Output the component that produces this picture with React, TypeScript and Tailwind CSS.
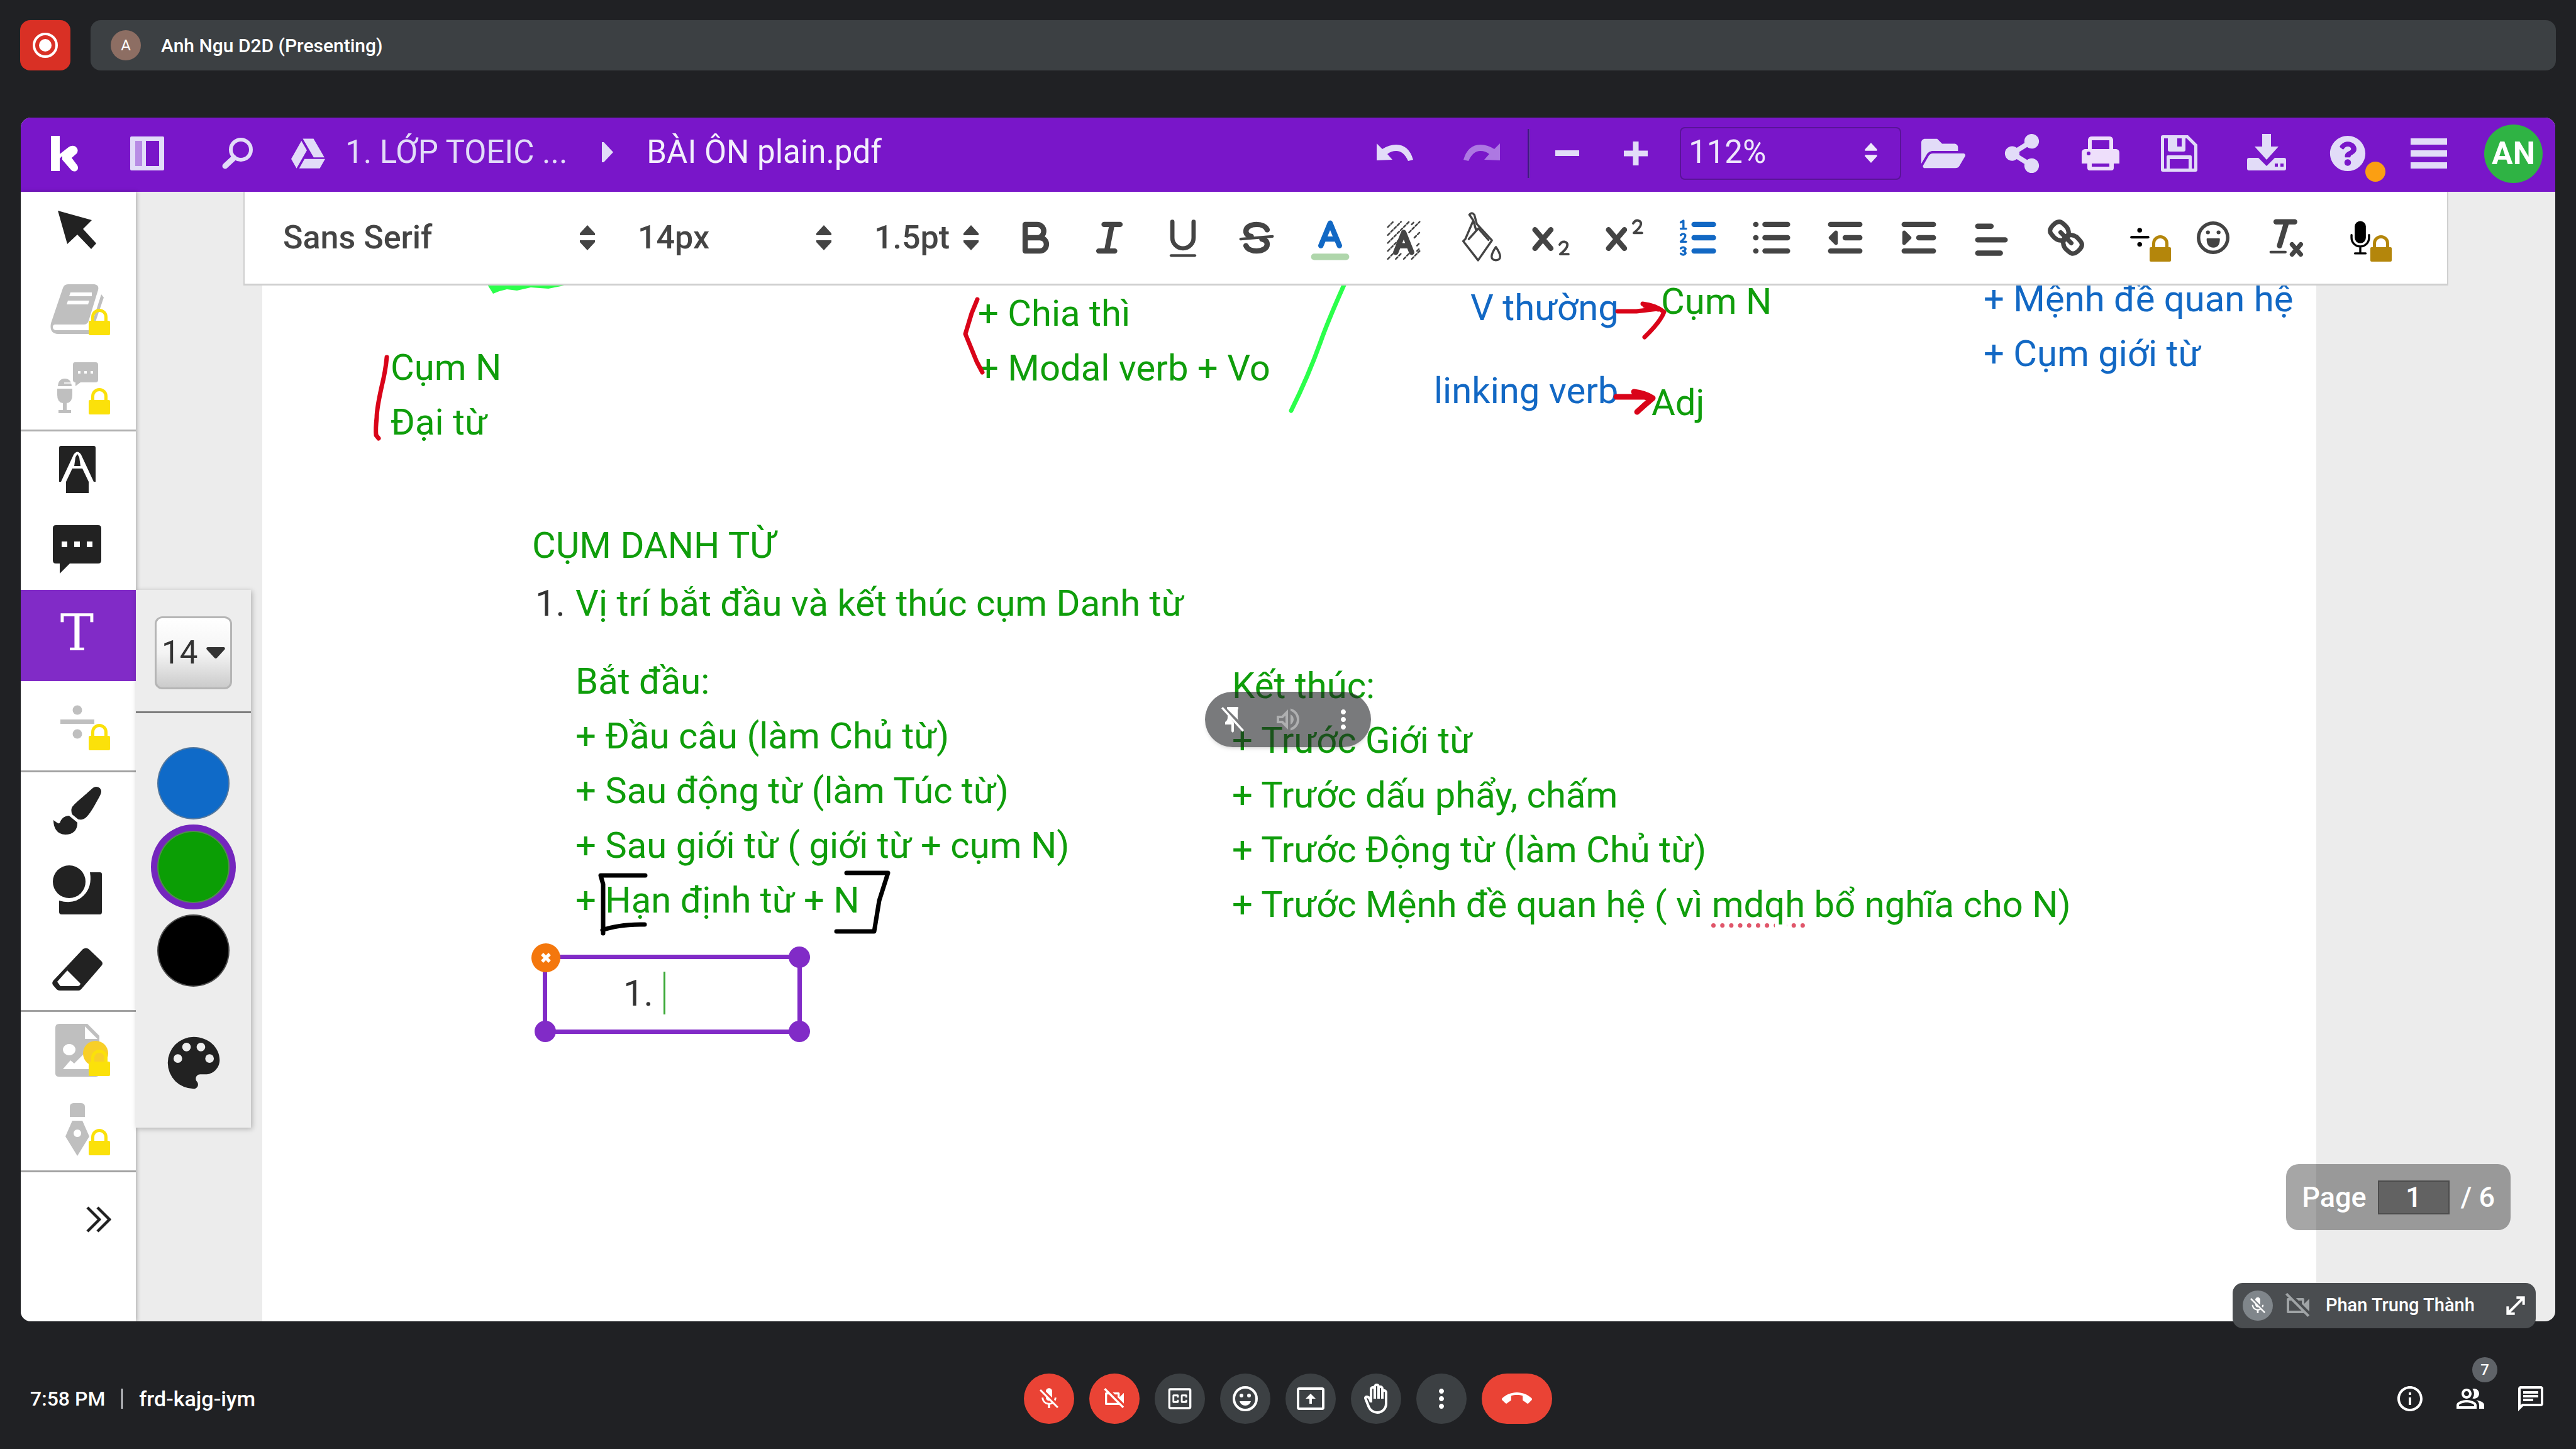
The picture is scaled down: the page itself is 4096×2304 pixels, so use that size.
import React from "react";
import { FaFolderOpen, FaGoogleDrive, FaPaintBrush, FaQuestionCircle, FaShareAlt } from "react-icons/fa";
import {
  MdCallEnd,
  MdMicOff,
  MdMoreVert,
  MdOutlineBackHand,
  MdOutlineChat,
  MdOutlineInfo,
  MdOutlinePeopleAlt,
  MdOutlineVideocamOff,
  MdOutlineVolumeUp,
} from "react-icons/md";

type IconProps = { className?: string; viewBox?: string; children: React.ReactNode };

function Icon({ className = "size-12", viewBox = "0 0 24 24", children }: IconProps) {
  return (
    <svg aria-hidden="true" className={className} viewBox={viewBox} fill="currentColor">
      {children}
    </svg>
  );
}

function SortArrows({ className }: { className: string }) {
  return (
    <Icon className={className} viewBox="0 0 24 40">
      <path d="M12 0 24 13v3H0v-3zM0 24h24v3L12 40 0 27z" />
    </Icon>
  );
}

function Lock({ className }: { className: string }) {
  return (
    <Icon className={className} viewBox="0 0 34 42">
      <path d="M2 19h2v-6a13 13 0 0 1 26 0v6h2a2 2 0 0 1 2 2v19a2 2 0 0 1-2 2H2a2 2 0 0 1-2-2V21a2 2 0 0 1 2-2zm7 0h16v-6a8 8 0 0 0-16 0z" />
    </Icon>
  );
}

/* ---------- Meet top bar ---------- */

function PresenterBar() {
  return (
    <header className="flex items-center gap-8 px-8 pt-8">
      <button aria-label="Recording" className="flex size-20 items-center justify-center rounded-2xl bg-[#d93025] text-white">
        <Icon className="size-12">
          <circle cx="12" cy="12" r="9" fill="none" stroke="currentColor" strokeWidth="2" />
          <circle cx="12" cy="12" r="5" />
        </Icon>
      </button>
      <div className="flex h-20 flex-1 items-center gap-8 rounded-2xl bg-[#3c4043] px-8">
        <span className="flex size-12 items-center justify-center rounded-full bg-[#8d6e63] text-[24px] text-white">A</span>
        <span className="text-[30px] font-medium text-white">Anh Ngu D2D (Presenting)</span>
      </div>
    </header>
  );
}

/* ---------- Kami title bar ---------- */

function HeaderButton({ label, width, children }: { label: string; width: string; children: React.ReactNode }) {
  return (
    <button aria-label={label} className={`relative flex h-full shrink-0 items-center justify-center ${width}`}>
      {children}
    </button>
  );
}

function TitleBar() {
  return (
    <div className="flex h-[118px] shrink-0 items-center bg-[#7916c9] pr-5 pb-1 pl-12 text-[#e2dcf8]">
      <a href="#home" aria-label="Kami" className="text-white">
        <Icon className="h-[58px] w-[46px]" viewBox="0 0 46 58">
          <path d="M0 1h14v29L28 19q6-4 11-1 6 5 2 11L33 36l9 12q3 6-2 9-5 2-9-3L18 39v-6l-4 4v20H0z" />
        </Icon>
      </a>
      <button aria-label="Toggle sidebar" className="ml-20">
        <Icon className="h-[54px] w-[54px]" viewBox="0 0 54 54">
          <path fillRule="evenodd" d="M2 0h50a2 2 0 0 1 2 2v50a2 2 0 0 1-2 2H2a2 2 0 0 1-2-2V2a2 2 0 0 1 2-2zm6 7v40h11V7zm17 0v40h21V7z" />
          <path d="M8 7h11v40H8z" opacity=".6" />
        </Icon>
      </button>
      <button aria-label="Search" className="ml-[92px]">
        <Icon className="size-[52px]" viewBox="0 0 52 52">
          <g fill="none" stroke="currentColor" strokeLinecap="round">
            <circle cx="30" cy="20" r="16" strokeWidth="6" />
            <path d="M19 33 5 46" strokeWidth="9" />
          </g>
        </Icon>
      </button>
      <FaGoogleDrive aria-hidden="true" className="ml-[58px] size-[54px]" />
      <nav aria-label="Breadcrumb" className="ml-8 flex items-center pb-1 text-[51px] leading-[64px]">
        <a href="#folder">1. LỚP TOEIC ...</a>
        <Icon className="mx-[53px] h-8 w-5" viewBox="0 0 20 32">
          <path d="M2 0h3l15 16L5 32H2z" />
        </Icon>
        <span className="text-[#f3effc]">BÀI ÔN plain.pdf</span>
      </nav>

      <div className="ml-auto flex h-full items-center">
        <HeaderButton label="Undo" width="w-[138px]">
          <Icon className="h-8 w-[58px]" viewBox="0 0 58 32">
            <path d="M0 0 9 9Q20 2 31 2q20 0 27 24l-8 2Q43 12 31 12q-8 0-14 5l8 9-25 1z" />
          </Icon>
        </HeaderButton>
        <HeaderButton label="Redo" width="w-[138px]">
          <Icon className="h-8 w-[58px] text-[#ad78e2]" viewBox="0 0 58 32">
            <path d="M58 0 49 9Q38 2 27 2 7 2 0 26l8 2Q15 12 27 12q8 0 14 5l-8 9 25 1z" />
          </Icon>
        </HeaderButton>
        <span className="mx-1 h-[78px] w-1 border-r border-[#8d4bd0] bg-[#3d1a7d]" />
        <HeaderButton label="Zoom out" width="w-[109px]">
          <Icon className="size-[38px]" viewBox="0 0 38 38">
            <rect y="14" width="38" height="9" />
          </Icon>
        </HeaderButton>
        <HeaderButton label="Zoom in" width="w-[109px]">
          <Icon className="size-[38px]" viewBox="0 0 38 38">
            <path d="M14.500 0h9v14.500H38v9H23.500V38h-9V23.500H0v-9h14.500z" />
          </Icon>
        </HeaderButton>
        <div className="relative mr-1 ml-4 h-[84px] w-[352px] rounded-lg border-2 border-[#5a1398] text-[#eee8fb]">
          <select aria-label="Zoom level" className="size-full appearance-none bg-transparent pb-1 pl-3 text-[51px] leading-[64px]">
            <option>112%</option>
          </select>
          <SortArrows className="pointer-events-none absolute top-[23px] right-9 h-[32px] w-5" />
        </div>
        <HeaderButton label="Open" width="w-[125px]">
          <FaFolderOpen className="size-[70px]" />
        </HeaderButton>
        <HeaderButton label="Share" width="w-[125px]">
          <FaShareAlt className="size-[62px]" />
        </HeaderButton>
        <HeaderButton label="Print" width="w-[125px]">
          <Icon className="h-[54px] w-[60px] text-[#eedffb]" viewBox="0 0 60 54">
            <path fillRule="evenodd" d="M10 20V5q1-5 6-5h28q5 0 6 5v15h5q5 1 5 6v17h-9v7q0 4-4 4H13q-4 0-4-4v-7H0V26q0-5 5-6zm6-14v14h28V6zM16 43v5h28v-5z" />
            <circle cx="11" cy="27" r="3" fill="#7916c9" />
          </Icon>
        </HeaderButton>
        <HeaderButton label="Save" width="w-[125px]">
          <Icon className="size-[58px]" viewBox="0 0 58 58">
            <path fillRule="evenodd" d="M3 0h40l15 15v40a3 3 0 0 1-3 3H3a3 3 0 0 1-3-3V3a3 3 0 0 1 3-3zm2 5v48h4V34q0-2 2-2h36q2 0 2 2v19h4V17L41 5h-2v18q0 3-3 3H14q-3 0-3-3V5zm9 33v15h30V38zM26 5v13h7V5z" />
          </Icon>
        </HeaderButton>
        <div className="ml-3 flex h-full">
          <HeaderButton label="Download" width="w-[129px]">
            <Icon className="mb-1 h-[58px] w-[62px]" viewBox="0 0 62 58">
              <path fillRule="evenodd" d="M24 0h14v20h12L31 41 12 20h12zM3 38h15l13 13 13-13h15q3 0 3 3v14q0 3-3 3H3q-3 0-3-3V41q0-3 3-3zm41 9v5h5v-5zm9 0v5h5v-5z" />
            </Icon>
          </HeaderButton>
          <HeaderButton label="Help" width="w-[129px]">
            <FaQuestionCircle className="size-[58px]" />
            <span className="absolute top-[70px] right-1 size-8 rounded-full bg-[#fb9f12]" />
          </HeaderButton>
          <HeaderButton label="Menu" width="w-[129px]">
            <Icon className="h-12 w-[58px]" viewBox="0 0 58 48">
              <path d="M0 0h58v10H0zM0 19h58v10H0zM0 38h58v10H0z" />
            </Icon>
          </HeaderButton>
        </div>
        <button className="ml-6 flex size-[93px] items-center justify-center rounded-full bg-[#2fb344] text-[50px] font-bold text-white">
          AN
        </button>
      </div>
    </div>
  );
}

/* ---------- Tool column ---------- */

function Tool({ label, locked = false, children }: { label: string; locked?: boolean; children: React.ReactNode }) {
  return (
    <button aria-label={label} className="relative flex h-[126px] w-full items-center justify-center pr-1 pb-1">
      {children}
      {locked && <Lock className="absolute top-[60px] right-[41px] h-[42px] w-[34px] text-[#fbe10a]" />}
    </button>
  );
}

const COLOURS = [
  { name: "Blue", className: "bg-[#0f6ac8]" },
  { name: "Green", className: "bg-[#0b9e05] ring-[10px] ring-[#7426bd]" },
  { name: "Black", className: "bg-black" },
];

function TextOptions() {
  return (
    <div className="absolute top-0 left-full z-20 w-[183px] bg-[#ededed] pb-[48px] shadow-[2px_2px_8px_rgba(0,0,0,0.25)]">
      <div className="flex h-[196px] items-start justify-center border-b-[3px] border-[#7e7e7e] pt-[42px]">
        <div className="relative h-[116px] w-[123px] rounded-xl border-3 border-[#b5b5b5] bg-linear-to-b from-white via-[#f4f4f4] to-[#cbcbcb] text-[#333]">
          <select aria-label="Text size" className="size-full appearance-none bg-transparent pl-[8px] text-[51px] leading-[64px]">
            <option>14</option>
          </select>
          <Icon className="pointer-events-none absolute top-[46px] right-2 h-5 w-[30px]" viewBox="0 0 30 20">
            <path d="M2 0h26q3 1 1 4L17 17q-2 2-4 0L1 4Q-1 1 2 0z" />
          </Icon>
        </div>
      </div>
      <fieldset className="flex flex-col items-center gap-[18px] pt-[54px]">
        {COLOURS.map((c) => (
          <input
            key={c.name}
            type="radio"
            name="colour"
            aria-label={c.name}
            defaultChecked={c.name === "Green"}
            className={`size-[115px] appearance-none rounded-full border-2 border-[#808080]/60 ${c.className}`}
          />
        ))}
      </fieldset>
      <button aria-label="More colours" className="mx-auto mt-[66px] block text-[#222]">
        <Icon className="size-[110px]">
          <path d="M12 3a9 9 0 0 0 0 18c.83 0 1.500-.67 1.500-1.500 0-.39-.15-.74-.39-1.010-.23-.26-.38-.61-.38-.99 0-.83.67-1.500 1.500-1.500H16c2.760 0 5-2.240 5-5 0-4.420-4.030-8-9-8zm-5.500 9a1.500 1.500 0 1 1 0-3 1.500 1.500 0 0 1 0 3zm3-4a1.500 1.500 0 1 1 0-3 1.500 1.500 0 0 1 0 3zm5 0a1.500 1.500 0 1 1 0-3 1.500 1.500 0 0 1 0 3zm3 4a1.500 1.500 0 1 1 0-3 1.500 1.500 0 0 1 0 3z" />
        </Icon>
      </button>
    </div>
  );
}

function ToolColumn() {
  return (
    <aside className="relative z-10 flex w-[183px] shrink-0 flex-col bg-white text-[#222] shadow-[2px_0_6px_rgba(0,0,0,0.25)]">
      <div className="border-b-3 border-[#b0b0b0]">
        <Tool label="Select">
          <Icon className="size-[62px]" viewBox="0 0 62 62">
            <path d="M0 0 54 15 40 29 61 52 53 61 31 38 15 53z" />
          </Icon>
        </Tool>
        <Tool label="Dictionary" locked>
          <Icon className="h-[80px] w-[86px] text-[#bfbfbf]" viewBox="0 0 86 80">
            <path d="M28 0h42q8 1 6 9L61 58q-2 6-8 6H8q-4 0-4 4t4 5h58v6H12Q-2 78 1 62L20 6q2-6 8-6z" />
            <path d="m81 16 4 5-17 50-5 2z" />
            <path d="M32 13h34v6H30zM28 26h34l-2 6H26z" fill="#fff" />
          </Icon>
        </Tool>
        <Tool label="Speech to text" locked>
          <Icon className="h-[84px] w-[66px] text-[#bfbfbf]" viewBox="0 0 66 84">
            <path fillRule="evenodd" d="M29 0h33q4 0 4 4v24q0 4-4 4H38l-8 6v-6q-4 0-4-4V4q0-4 3-4zm5 14v4h4v-4zm10 0v4h4v-4zm10 0v4h4v-4z" />
            <path d="M1 42h24v10q0 12-9 13v11h7v5H3v-5h7V65Q1 64 1 52zM2 38q1-12 11-12t11 12z" />
            <path d="M1 39.500h13M12 33h12" stroke="#fff" strokeWidth="1.500" />
          </Icon>
        </Tool>
      </div>
      <div>
        <Tool label="Markup">
          <Icon className="h-[76px] w-[58px]" viewBox="0 0 58 76">
            <path d="M3 0h52q3 0 3 3v54h-3L35 14q-6-9-12 0L3 57H0V3q0-3 3-3z" />
            <path d="M21 36h16l10 21v18H11V57z" />
            <path d="m26 18 3-5 3 5 2 14H24z" />
          </Icon>
        </Tool>
        <Tool label="Comment">
          <Icon className="size-[77px]" viewBox="0 0 77 77">
            <path fillRule="evenodd" d="M5 0h67q5 0 5 5v51q0 5-5 5H27L11 77V61H5q-5 0-5-5V5q0-5 5-5zm9 26v9h9v-9zm20 0v9h9v-9zm20 0v9h9v-9z" />
          </Icon>
        </Tool>
      </div>
      <div className="relative">
        <button aria-label="Text" className="flex h-[145px] w-full items-center justify-center bg-[#812bc7] pr-1 pb-2 font-['DejaVu_Serif'] text-[80px] leading-[80px] text-white">
          T
        </button>
        <TextOptions />
      </div>
      <div className="border-b-3 border-[#a2a2a2] pt-2 pb-2">
        <Tool label="Equation" locked>
          <Icon className="mb-2 h-[54px] w-[54px] text-[#bfbfbf]" viewBox="0 0 54 54">
            <circle cx="27" cy="8" r="7.500" />
            <rect y="23" width="54" height="7" />
            <circle cx="27" cy="46" r="7.500" />
          </Icon>
        </Tool>
      </div>
      <div className="border-b-3 border-[#a2a2a2]">
        <Tool label="Drawing">
          <FaPaintBrush className="size-[76px]" />
        </Tool>
        <Tool label="Shapes">
          <Icon className="size-[78px]" viewBox="0 0 78 78">
            <circle cx="26" cy="26" r="26" />
            <path d="M59 11h16q3 0 3 3v60q0 4-3 4H14q-4 0-4-4V56q24 7 39-8 14-14 10-37z" />
          </Icon>
        </Tool>
        <Tool label="Eraser">
          <Icon className="h-[68px] w-[80px]" viewBox="0 0 80 68">
            <path fillRule="evenodd" d="M49 2q5-3 9 0l20 19q4 4 0 8L46 66q-2 2-4 2H12q-3 0-5-2L1 59q-2-4 1-7zM24 36 8 54l5 7h27q4 0 5-4z" />
          </Icon>
        </Tool>
      </div>
      <div className="border-b-3 border-[#a2a2a2]">
        <Tool label="Media" locked>
          <Icon className="h-[84px] w-[70px] text-[#bfbfbf]" viewBox="0 0 70 84">
            <path fillRule="evenodd" d="M6 0h45l19 19v60q0 5-6 5H6q-6 0-6-5V6q0-6 6-6zm41 4v20h20zM22 32a10 9 0 1 0 .1 0zM12 72h48V50L47 46 30 63l-6-5z" />
          </Icon>
          <span className="absolute top-[46px] right-[44px] size-10 rounded-full bg-[#f8cf28]" />
        </Tool>
        <Tool label="Signature" locked>
          <Icon className="h-[84px] w-[38px] text-[#bfbfbf]" viewBox="0 0 38 84">
            <path d="M13 0h12q6 0 6 6v16H7V6q0-6 6-6z" />
            <path fillRule="evenodd" d="M11 28h16l11 25-19 31L0 53zm8 14a6 6 0 1 0 .1 0z" />
          </Icon>
        </Tool>
      </div>
      <button aria-label="Expand tools" className="mt-[54px] ml-[104px] self-start">
        <Icon className="h-[42px] w-[40px]" viewBox="0 0 40 42">
          <path d="m2 2 19 19L2 40M18 2l19 19-19 19" fill="none" stroke="currentColor" strokeWidth="4.500" />
        </Icon>
      </button>
    </aside>
  );
}

/* ---------- Rich text toolbar ---------- */

function FormatSelect({ label, value, width }: { label: string; value: string; width: string }) {
  return (
    <div className={`relative flex shrink-0 items-center ${width}`}>
      <select aria-label={label} className="w-full appearance-none bg-transparent text-[52px] leading-[72px] font-medium">
        <option>{value}</option>
      </select>
      <SortArrows className="pointer-events-none absolute right-0 h-10 w-6" />
    </div>
  );
}

const X_SHAPE = <path d="m3 6 6 7m0-7-6 7" />;

const FORMAT_ICONS: { label: string; art: React.ReactNode; tone?: string; locked?: boolean }[] = [
  { label: "Bold", art: <path d="M5 4h4.500a2.500 2.500 0 0 1 0 5H5zM5 9h5.500a2.500 2.500 0 0 1 0 5H5z" /> },
  { label: "Italic", art: <path d="M7 4h6M5 14h6M8 14l2-10" /> },
  {
    label: "Underline",
    art: (
      <>
        <path d="M5 3v6a4 4 0 0 0 8 0V3" strokeWidth="1.600" />
        <path d="M4.500 15.700h9" strokeWidth="1" />
      </>
    ),
  },
  {
    label: "Strike",
    art: (
      <>
        <path d="M15 8.500 3 9.500" strokeWidth="1" />
        <path d="M13 6c-.5-1.200-2-2-4-2-2.300 0-4 1-4 2.500 0 1 .5 1.700 2 2M5 12c.5 1.200 2 2 4 2 2.300 0 4-1 4-2.500 0-1-.5-1.700-2-2" />
      </>
    ),
  },
  {
    label: "Text colour",
    tone: "text-[#1268c4]",
    art: (
      <>
        <path d="M5.500 12 9 3.500l3.500 8.500M6.800 9.500h4.400" />
        <path d="M3 16.200h12" stroke="#afd6ab" strokeWidth="2.400" />
      </>
    ),
  },
  {
    label: "Highlight",
    art: (
      <>
        <path
          d="M3 5l2-2M3 8l5-5M3 11l8-8M3 14l4-4M3 17l3-3M6 17l2-2M9 17l2-2M12 17l3-3M14 12l1-1M13 9l2-2M11 7l4-4M14 14l1-1M12 4l1-1"
          strokeWidth=".6"
          strokeDasharray="1 .7"
        />
        <path d="M6 14.500 9 7l3 7.500M7 12h4" />
      </>
    ),
  },
  {
    label: "Fill",
    art: (
      <g strokeWidth=".8">
        <path d="M7.500 2.500 4.500 9.500l-.8.8L9.300 17.500l5.200-7.500L8.800 3.800 7.900.4Q7-.8 6 .3zL8.500 6" />
        <path d="m5.800 9.500 3.600-4 3.800 4.300" />
        <path d="M16 12.500q-3.200 4.700 0 5 3.200-.3 0-5z" />
      </g>
    ),
  },
  {
    label: "Subscript",
    art: (
      <>
        {X_SHAPE}
        <path d="M12.300 11.600q.6-1.200 1.800-1.100 1.600.4.900 2-.6 1.200-2.500 2.700h3.100" strokeWidth=".9" />
      </>
    ),
  },
  {
    label: "Superscript",
    art: (
      <>
        {X_SHAPE}
        <path d="M12.300 3.600q.6-1.200 1.800-1.100 1.600.4.900 2-.6 1.200-2.500 2.700h3.100" strokeWidth=".9" />
      </>
    ),
  },
  {
    label: "Numbered list",
    tone: "text-[#1268c4]",
    art: (
      <>
        <path d="M7.500 4h7.300M7.500 9h7.300M7.500 14h7.300" />
        <path d="M2.500 3.200l1-.6v3M2.500 5.600h2M2.500 8q1-.9 1.700 0 .2.900-1.700 2.500h2M2.500 13q1-.8 1.800.1 0 .8-1 .9 1 .1 1 .9-.8 1-1.800.1" strokeWidth=".8" />
      </>
    ),
  },
  { label: "Bulleted list", art: <path d="M6.500 4H15M6.500 9H15M6.500 14H15M3 4h.1M3 9h.1M3 14h.1" /> },
  {
    label: "Outdent",
    art: (
      <>
        <path d="M3.500 4h11M9 9h5.500M3.500 14h11" />
        <path d="M5.500 7v4l-2-2z" fill="currentColor" strokeWidth="1.400" />
      </>
    ),
  },
  {
    label: "Indent",
    art: (
      <>
        <path d="M3.500 4h11M9 9h5.500M3.500 14h11" />
        <path d="M3.500 7v4l2-2z" fill="currentColor" strokeWidth="1.400" />
      </>
    ),
  },
  { label: "Align", art: <path d="M3.500 4.700h5M3.500 9.800h10.300M3.500 14.800h8.500" /> },
  {
    label: "Link",
    art: (
      <g strokeWidth="1.700">
        <path d="m7 7 4 4" />
        <path d="M8.900 4.600a3.500 3.500 0 0 1 .4 4.700A3.500 3.500 0 0 1 4.600 8.900C3.200 7.500 2 6.400 4.200 4.200S7.500 3.200 8.900 4.600Z" />
        <path d="M13.400 9.100a3.500 3.500 0 0 0-4.700-.4 3.500 3.500 0 0 0 .4 4.700c1.400 1.400 2.500 2.500 4.700.4S14.800 10.500 13.400 9.100Z" />
      </g>
    ),
  },
  {
    label: "Equation",
    tone: "text-black",
    locked: true,
    art: (
      <>
        <path d="M6 8.800h6.200" strokeWidth="1" />
        <path d="M9 6.200h.1M9 11.500h.1" strokeWidth="1.700" />
      </>
    ),
  },
  {
    label: "Emoji",
    art: (
      <>
        <circle cx="9" cy="9" r="5.500" strokeWidth="1.300" />
        <path d="M7 7h.1M11 7h.1" strokeWidth="1.400" />
        <path d="M6.800 9.500h4.500q0 3-2.200 3-2.300 0-2.300-3z" fill="currentColor" strokeWidth=".5" />
      </>
    ),
  },
  {
    label: "Clear formatting",
    art: (
      <>
        <path d="M5 3h7M6.300 12 9 3" />
        <path d="M11 11.500l3.300 3.800m0-3.800L11 15.300" strokeWidth="1.700" />
        <path d="M3 14.400h5.500" strokeWidth="1" />
      </>
    ),
  },
  {
    label: "Dictate",
    tone: "text-black",
    locked: true,
    art: (
      <>
        <path d="M9 4.800v4.200" strokeWidth="4.200" />
        <path d="M5.700 8v1a3.300 3.300 0 0 0 6.600 0V8M9 12.500v2.300M7 14.900h4" strokeWidth=".8" />
      </>
    ),
  },
];

function FormatToolbar() {
  return (
    <div className="relative z-10 mr-[170px] ml-[171px] flex h-[149px] shrink-0 items-center border-x-2 border-b-3 border-[#cfcfcf] bg-white pl-[61px] text-[#444]">
      <div className="flex gap-[68px]">
        <FormatSelect label="Font" value="Sans Serif" width="w-[496px]" />
        <FormatSelect label="Font size" value="14px" width="w-[308px]" />
        <FormatSelect label="Line width" value="1.5pt" width="w-[166px]" />
      </div>
      <div className="ml-8 flex">
        {FORMAT_ICONS.map((item) => (
          <button
            key={item.label}
            aria-label={item.label}
            className={`relative flex h-[118px] w-[117px] items-center justify-center ${item.tone ?? ""}`}
          >
            <svg
              aria-hidden="true"
              viewBox="0 0 18 18"
              className="size-[76px] overflow-visible"
              fill="none"
              stroke="currentColor"
              strokeWidth="2"
              strokeLinecap="round"
              strokeLinejoin="round"
            >
              {item.art}
            </svg>
            {item.locked && <Lock className="absolute right-[8px] bottom-[21px] h-[42px] w-[34px] text-[#b4860b]" />}
          </button>
        ))}
      </div>
    </div>
  );
}

/* ---------- Document canvas ---------- */

type Note = { place: string; tone: string; lines: React.ReactNode[] };

const GREEN = "text-[#0f9d0b]";
const BLUE = "text-[#1268c4]";

const NOTES: Note[] = [
  { place: "left-[204px] top-[87px]", tone: GREEN, lines: ["Cụm N", "Đại từ"] },
  { place: "left-[1138px] top-[1px]", tone: GREEN, lines: ["+ Chia thì", "+ Modal verb + Vo"] },
  { place: "left-[1921px] -top-2", tone: BLUE, lines: ["V thường"] },
  { place: "left-[1863px] top-[124px]", tone: BLUE, lines: ["linking verb"] },
  { place: "left-[2224px] -top-[18px]", tone: GREEN, lines: ["Cụm N"] },
  { place: "left-[2209px] top-[143px]", tone: GREEN, lines: ["Adj"] },
  { place: "left-[2737px] -top-[22px]", tone: BLUE, lines: ["+ Mệnh đề quan hệ", "+ Cụm giới từ"] },
  { place: "left-[429px] top-[370px]", tone: GREEN, lines: ["CỤM DANH TỪ"] },
  {
    place: "left-[434px] top-[462px]",
    tone: GREEN,
    lines: [
      <>
        <span className="inline-block w-[64px] text-[#333]">1.</span>Vị trí bắt đầu và kết thúc cụm Danh từ
      </>,
    ],
  },
  {
    place: "left-[498px] top-[586px]",
    tone: GREEN,
    lines: ["Bắt đầu:", "+ Đầu câu (làm Chủ từ)", "+ Sau động từ (làm Túc từ)", "+ Sau giới từ ( giới từ + cụm N)", "+ Hạn định từ + N"],
  },
  {
    place: "left-[1542px] top-[593px]",
    tone: GREEN,
    lines: [
      "Kết thúc:",
      "+ Trước Giới từ",
      "+ Trước dấu phẩy, chấm",
      "+ Trước Động từ (làm Chủ từ)",
      <>
        + Trước Mệnh đề quan hệ ( vì{" "}
        <span className="underline decoration-[#e0566a] decoration-dotted decoration-[7px] underline-offset-[10px]">mdqh</span> bổ nghĩa cho N)
      </>,
    ],
  },
];

function Ink() {
  return (
    <svg
      aria-hidden="true"
      className="pointer-events-none absolute top-0 left-0 h-[1646px] w-[3266px]"
      viewBox="417 455 3266 1646"
      fill="none"
      strokeLinecap="round"
      strokeLinejoin="round"
      strokeWidth="7"
    >
      <path d="M774 452h138l-40 8-28-2-22 5-16-2-12 3-10 4z" fill="#2bff4b" />
      <path d="M2138 452q-26 58-38 92-20 56-47 110" stroke="#2bff4b" />
      <g stroke="#d90419">
        <path d="M615 569q-2 22-8 46-8 36-8 50-2 18-1 28l4 5" />
        <path d="m1554 477-9 22-10 33 18 44 9 17" />
        <path d="M2572 496h30l34-4M2612 484q20 2 34 13-6 16-31 40M2615 487l22 6" />
        <path d="M2570 632h54M2598 624q18 2 30 10-12 10-25 22M2600 628l22 6" strokeWidth="9" />
      </g>
      <path d="M1026 1393h-71l4 14v78M958 1480q24-9 67-9M1346 1389h66l-14 44-8 49h-60" stroke="#000" />
    </svg>
  );
}

function TextBox() {
  return (
    <div className="absolute top-[1064px] left-[446px] flex h-[126px] w-[412px] items-center border-[7px] border-[#812bc7] pb-1 pl-[121px]">
      <input aria-label="Text annotation" defaultValue="1." className="w-[60px] text-[58px] leading-[87px] text-[#333] outline-none" />
      <span className="ml-1 h-[68px] w-[3px] bg-[#3aa836]" />
      <span className="absolute -top-[20px] -right-[20px] size-[34px] rounded-full bg-[#812bc7]" />
      <span className="absolute -right-[20px] -bottom-[20px] size-[34px] rounded-full bg-[#812bc7]" />
      <span className="absolute -bottom-[20px] -left-[20px] size-[34px] rounded-full bg-[#812bc7]" />
      <button aria-label="Delete text box" className="absolute -top-[25px] -left-[25px] flex size-[46px] items-center justify-center rounded-full bg-[#f4770d]">
        <Icon className="size-4 text-white">
          <path d="m3 3 18 18M21 3 3 21" stroke="currentColor" strokeWidth="8" />
        </Icon>
      </button>
    </div>
  );
}

function Page() {
  return (
    <article className="relative mr-[380px] ml-[201px] flex-1 overflow-hidden bg-white">
      {NOTES.map((note) => (
        <div key={note.place} className={`absolute text-[58px] leading-[87px] whitespace-nowrap ${note.place} ${note.tone}`}>
          {note.lines.map((line, i) => (
            <p key={i}>{line}</p>
          ))}
        </div>
      ))}
      <Ink />
      <TextBox />
    </article>
  );
}

function PageCounter() {
  return (
    <label className="absolute right-[71px] bottom-[145px] z-10 flex h-[105px] items-center rounded-[20px] bg-black/35 pr-[25px] pl-[25px] text-[45px] font-medium text-white">
      Page
      <input aria-label="Page number" defaultValue="1" className="mr-[18px] ml-[18px] h-[54px] w-[114px] border-2 border-[#4c4c4c] bg-[#626262] text-center" />/ 6
    </label>
  );
}

function TileControls() {
  return (
    <div className="absolute top-1/2 left-1/2 z-20 flex -translate-1/2 rounded-full bg-[#202124]/60 text-white shadow-md">
      <button aria-label="Unpin" className="flex size-[88px] items-center justify-center">
        <Icon className="size-12">
          <path d="M7.500 2h9v2H16v6.500q0 1.500 1 2.500L7.500 3.500zM8 8.500l5 6v7l-1 1-1-1V16H6v-2q2-1.200 2-3.500zM3 3.200 4.200 2 21 20.500l-1.200 1.200z" />
        </Icon>
      </button>
      <button aria-label="Volume" className="flex size-[88px] items-center justify-center text-white/40">
        <MdOutlineVolumeUp className="size-12" />
      </button>
      <button aria-label="More options" className="flex size-[88px] items-center justify-center">
        <MdMoreVert className="size-12" />
      </button>
    </div>
  );
}

function SelfTile() {
  return (
    <div className="absolute right-[31px] -bottom-[11px] z-20 flex h-[72px] w-[482px] items-center rounded-2xl bg-[#4a4d50] px-4 text-white">
      <span className="flex size-12 items-center justify-center rounded-full bg-[#80868b]">
        <MdMicOff className="size-8" />
      </span>
      <MdOutlineVideocamOff className="ml-4 size-12 text-[#a0a4a6]" />
      <span className="ml-5 text-[29px] font-medium">Phan Trung Thành</span>
      <button aria-label="Expand" className="ml-auto">
        <Icon className="size-8">
          <path d="M13 1h10v10h-3V6.100L6.100 20H11v3H1V13h3v4.900L17.900 4H13z" />
        </Icon>
      </button>
    </div>
  );
}

function Presentation() {
  return (
    <main className="relative mx-[33px] mt-[75px] flex min-h-[1914px] flex-1 flex-col">
      <div className="flex flex-1 flex-col overflow-hidden rounded-2xl bg-[#ececec]">
        <TitleBar />
        <div className="flex flex-1">
          <ToolColumn />
          <section className="flex min-w-0 flex-1 flex-col">
            <FormatToolbar />
            <Page />
          </section>
        </div>
      </div>
      <PageCounter />
      <TileControls />
      <SelfTile />
    </main>
  );
}

/* ---------- Call controls ---------- */

function CallButton({ label, tone, children }: { label: string; tone: string; children: React.ReactNode }) {
  return (
    <button aria-label={label} className={`flex h-20 items-center justify-center rounded-full text-white ${tone}`}>
      {children}
    </button>
  );
}

function CallBar() {
  const red = "w-20 bg-[#ea4335]";
  const grey = "w-20 bg-[#3c4043]";
  return (
    <footer className="mt-[43px] grid h-[160px] grid-cols-[1fr_auto_1fr] items-center px-12 text-white">
      <div className="flex items-center font-medium">
        <time className="text-[32px]">7:58 PM</time>
        <span className="mx-[26px] h-8 w-[2px] bg-[#dadce0]" />
        <span className="text-[34px]">frd-kajg-iym</span>
      </div>
      <div className="flex gap-6">
        <CallButton label="Turn on microphone" tone={red}>
          <MdMicOff className="size-10" />
        </CallButton>
        <CallButton label="Turn on camera" tone={red}>
          <MdOutlineVideocamOff className="size-10" />
        </CallButton>
        <CallButton label="Turn on captions" tone={grey}>
          <Icon className="size-10">
            <path fillRule="evenodd" d="M3 2h18q2 0 2 2v16q0 2-2 2H3q-2 0-2-2V4q0-2 2-2zm0 2v16h18V4zm3 4h4q1 0 1 1v2H9.300V9.800H6.700v4.400h2.600V13H11v2q0 1-1 1H6q-1 0-1-1V9q0-1 1-1zm8 0h4q1 0 1 1v2h-1.700V9.800h-2.600v4.400h2.600V13H19v2q0 1-1 1h-4q-1 0-1-1V9q0-1 1-1z" />
          </Icon>
        </CallButton>
        <CallButton label="Send a reaction" tone={grey}>
          <Icon className="size-12">
            <circle cx="12" cy="12" r="9" fill="none" stroke="currentColor" strokeWidth="2" />
            <circle cx="9" cy="9.500" r="1.500" />
            <circle cx="15" cy="9.500" r="1.500" />
            <path d="M7.500 14h9q-1 3.500-4.500 3.500T7.500 14z" />
          </Icon>
        </CallButton>
        <CallButton label="Present now" tone={grey}>
          <Icon className="size-12">
            <path fillRule="evenodd" d="M3 3h18q2 0 2 2v14q0 2-2 2H3q-2 0-2-2V5q0-2 2-2zm0 2v14h18V5zm9 3 4 4h-3v4h-2v-4H8z" />
          </Icon>
        </CallButton>
        <CallButton label="Raise hand" tone={grey}>
          <MdOutlineBackHand className="size-12" />
        </CallButton>
        <CallButton label="More options" tone={grey}>
          <MdMoreVert className="size-12" />
        </CallButton>
        <CallButton label="Leave call" tone="w-28 bg-[#ea4335]">
          <MdCallEnd className="size-12" />
        </CallButton>
      </div>
      <div className="flex justify-end gap-12">
        <button aria-label="Meeting details">
          <MdOutlineInfo className="size-12" />
        </button>
        <button aria-label="Show everyone" className="relative">
          <MdOutlinePeopleAlt className="size-12" />
          <span className="absolute -top-[42px] left-[27px] flex size-10 items-center justify-center rounded-full bg-[#5f6368] text-[24px] font-medium">
            7
          </span>
        </button>
        <button aria-label="Chat">
          <MdOutlineChat className="size-12" />
        </button>
      </div>
    </footer>
  );
}

export default function App() {
  return (
    <div className="flex min-h-screen flex-col bg-[#202124] font-['Roboto',sans-serif]">
      <PresenterBar />
      <Presentation />
      <CallBar />
    </div>
  );
}
